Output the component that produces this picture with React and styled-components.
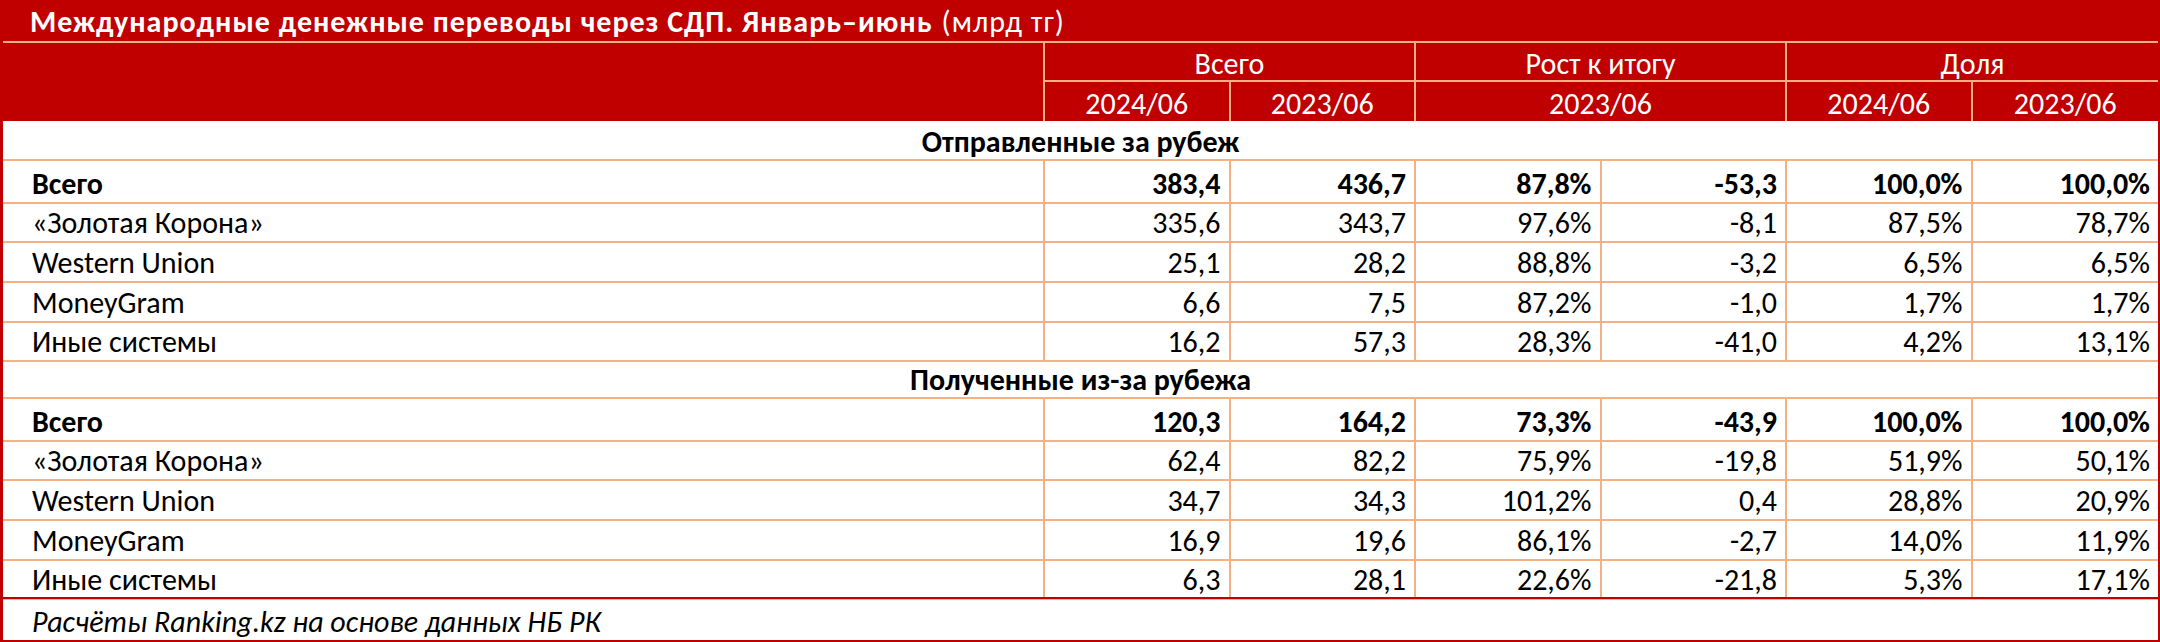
import React from 'react'
import styled, { createGlobalStyle } from 'styled-components'

const RED = '#c00000'
const LINE = '#f4b183'
const COLS = '1042px repeat(6, 1fr)'

const GlobalStyle = createGlobalStyle`
	html, body {
		margin: 0;
		padding: 0;
		background: #fff;
	}
	body {
		font-family: Carlito, Lato, 'Liberation Sans', sans-serif;
	}
`

const Table = styled.div`
	width: 2160px;
	height: 642px;
	box-sizing: border-box;
	border-left: 3px solid ${RED};
	border-right: 2px solid ${RED};
	border-bottom: 2px solid ${RED};
	display: flex;
	flex-direction: column;
	font-size: 30px;
	color: #000;
`

const Title = styled.div`
	height: 46px;
	box-sizing: border-box;
	background: ${RED};
	border-bottom: 2px solid ${LINE};
	color: #fff;
	font-weight: 700;
	letter-spacing: 1px;
	display: flex;
	align-items: center;
	padding: 2px 0 0 27px;
	white-space: nowrap;
`

const Unit = styled.span`
	font-weight: 400;
	margin-left: 9px;
`

const Head = styled.div`
	display: grid;
	grid-template-columns: ${COLS};
	grid-template-rows: 39px 39px;
	background: ${RED};
	color: #fff;
`

const HeadCell = styled.div`
	grid-column: ${p => p.$col || 'auto'};
	grid-row: ${p => p.$row || 'auto'};
	display: flex;
	align-items: center;
	justify-content: center;
	box-sizing: border-box;
	padding-top: 3px;
	border-right: ${p => (p.$last ? 'none' : `2px solid ${LINE}`)};
	border-bottom: ${p => (p.$top ? `2px solid ${LINE}` : 'none')};
`

const Body = styled.div`
	display: grid;
	grid-auto-rows: calc(476px / 12);
`

const Row = styled.div`
	display: grid;
	grid-template-columns: ${COLS};
	font-weight: ${p => (p.$bold ? 700 : 400)};
`

const Cell = styled.div`
	display: flex;
	align-items: center;
	justify-content: ${p => (p.$label ? 'flex-start' : 'flex-end')};
	box-sizing: border-box;
	padding: 4px ${p => (p.$label ? '0 0 29px' : '8px 0 0')};
	border-bottom: 2px solid ${LINE};
	border-right: ${p => (p.$last ? 'none' : `2px solid ${LINE}`)};
	white-space: nowrap;
`

const Section = styled.div`
	display: flex;
	align-items: center;
	justify-content: center;
	box-sizing: border-box;
	padding-top: 4px;
	font-weight: 700;
	border-bottom: 2px solid ${LINE};
`

const Footer = styled.div`
	flex: 1;
	display: flex;
	align-items: center;
	box-sizing: border-box;
	padding: 4px 0 0 29px;
	border-top: 2px solid ${RED};
	font-style: italic;
`

const sent = [
	['Всего', '383,4', '436,7', '87,8%', '-53,3', '100,0%', '100,0%'],
	['«Золотая Корона»', '335,6', '343,7', '97,6%', '-8,1', '87,5%', '78,7%'],
	['Western Union', '25,1', '28,2', '88,8%', '-3,2', '6,5%', '6,5%'],
	['MoneyGram', '6,6', '7,5', '87,2%', '-1,0', '1,7%', '1,7%'],
	['Иные системы', '16,2', '57,3', '28,3%', '-41,0', '4,2%', '13,1%']
]

const received = [
	['Всего', '120,3', '164,2', '73,3%', '-43,9', '100,0%', '100,0%'],
	['«Золотая Корона»', '62,4', '82,2', '75,9%', '-19,8', '51,9%', '50,1%'],
	['Western Union', '34,7', '34,3', '101,2%', '0,4', '28,8%', '20,9%'],
	['MoneyGram', '16,9', '19,6', '86,1%', '-2,7', '14,0%', '11,9%'],
	['Иные системы', '6,3', '28,1', '22,6%', '-21,8', '5,3%', '17,1%']
]

const DataRows = ({ rows }) =>
	rows.map((row, i) => (
		<Row key={row[0]} $bold={i === 0}>
			{row.map((value, j) => (
				<Cell key={j} $label={j === 0} $last={j === row.length - 1}>
					{value}
				</Cell>
			))}
		</Row>
	))

const App = () => (
	<>
		<GlobalStyle />
		<Table>
			<Title>
				Международные денежные переводы через СДП. Январь–июнь
				<Unit>(млрд тг)</Unit>
			</Title>
			<Head>
				<HeadCell $col="1" $row="1 / span 2" />
				<HeadCell $col="2 / span 2" $top>Всего</HeadCell>
				<HeadCell $col="4 / span 2" $top>Рост к итогу</HeadCell>
				<HeadCell $col="6 / span 2" $top $last>Доля</HeadCell>
				<HeadCell>2024/06</HeadCell>
				<HeadCell>2023/06</HeadCell>
				<HeadCell $col="span 2">2023/06</HeadCell>
				<HeadCell>2024/06</HeadCell>
				<HeadCell $last>2023/06</HeadCell>
			</Head>
			<Body>
				<Section>Отправленные за рубеж</Section>
				<DataRows rows={sent} />
				<Section>Полученные из-за рубежа</Section>
				<DataRows rows={received} />
			</Body>
			<Footer>Расчёты Ranking.kz на основе данных НБ РК</Footer>
		</Table>
	</>
)

export default App
